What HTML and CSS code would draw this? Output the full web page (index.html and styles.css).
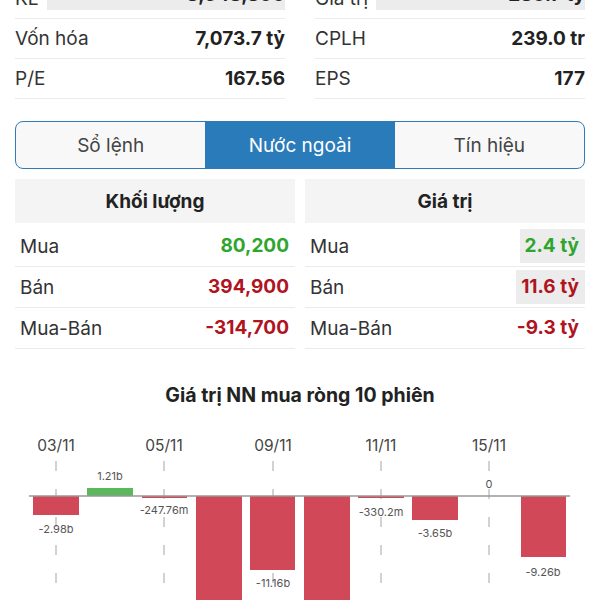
FILE: index.html
```html
<!DOCTYPE html>
<html lang="vi">
<head>
<meta charset="utf-8">
<link rel="stylesheet" href="styles.css">
</head>
<body>
<div class="wrap">
  <div class="stats">
    <div class="col">
      <div class="srow first"><span class="lbl">KL</span><span class="val flash">8,648,800</span></div>
      <div class="srow"><span class="lbl">Vốn hóa</span><span class="val">7,073.7 tỷ</span></div>
      <div class="srow"><span class="lbl">P/E</span><span class="val">167.56</span></div>
    </div>
    <div class="col">
      <div class="srow first"><span class="lbl">Giá trị</span><span class="val flash">280.7 tỷ</span></div>
      <div class="srow"><span class="lbl">CPLH</span><span class="val">239.0 tr</span></div>
      <div class="srow"><span class="lbl">EPS</span><span class="val">177</span></div>
    </div>
  </div>

  <div class="tabs">
    <div class="tab">Sổ lệnh</div>
    <div class="tab active">Nước ngoài</div>
    <div class="tab">Tín hiệu</div>
  </div>

  <div class="tables">
    <div class="tbl">
      <div class="thead">Khối lượng</div>
      <div class="trow"><span class="lbl">Mua</span><span class="num up">80,200</span></div>
      <div class="trow"><span class="lbl">Bán</span><span class="num down">394,900</span></div>
      <div class="trow"><span class="lbl">Mua-Bán</span><span class="num down">-314,700</span></div>
    </div>
    <div class="tbl">
      <div class="thead">Giá trị</div>
      <div class="trow"><span class="lbl">Mua</span><span class="num up hl">2.4 tỷ</span></div>
      <div class="trow"><span class="lbl">Bán</span><span class="num down hl">11.6 tỷ</span></div>
      <div class="trow"><span class="lbl">Mua-Bán</span><span class="num down">-9.3 tỷ</span></div>
    </div>
  </div>
</div>

<h3 class="ctitle">Giá trị NN mua ròng 10 phiên</h3>

<svg class="chart" width="600" height="180" viewBox="0 0 600 180">
  <g class="grid">
    <line x1="56" y1="41" x2="56" y2="180"/>
    <line x1="164" y1="41" x2="164" y2="180"/>
    <line x1="273" y1="41" x2="273" y2="180"/>
    <line x1="381" y1="41" x2="381" y2="180"/>
    <line x1="489" y1="41" x2="489" y2="180"/>
  </g>
  <g class="dates">
    <text x="56" y="31">03/11</text>
    <text x="164" y="31">05/11</text>
    <text x="273" y="31">09/11</text>
    <text x="381" y="31">11/11</text>
    <text x="489" y="31">15/11</text>
  </g>
  <g class="neg">
    <rect x="33" y="76" width="46" height="19"/>
    <rect x="142" y="76" width="45" height="2"/>
    <rect x="196" y="76" width="46" height="110"/>
    <rect x="250" y="76" width="45" height="74"/>
    <rect x="304" y="76" width="46" height="110"/>
    <rect x="358" y="76" width="46" height="2"/>
    <rect x="412" y="76" width="46" height="24"/>
    <rect x="521" y="76" width="45" height="61"/>
  </g>
  <rect class="pos" x="87" y="68" width="46" height="8"/>
  <line class="zero" x1="29" y1="76" x2="570" y2="76"/>
  <g class="vals">
    <text x="56" y="113">-2.98b</text>
    <text x="110" y="60">1.21b</text>
    <text x="164" y="94">-247.76m</text>
    <text x="273" y="167">-11.16b</text>
    <text x="381" y="96">-330.2m</text>
    <text x="435" y="117">-3.65b</text>
    <text x="489" y="68">0</text>
    <text x="543" y="156">-9.26b</text>
  </g>
</svg>
</body>
</html>
```

FILE: styles.css
```css
html, body {
  margin: 0;
  padding: 0;
  background: #fff;
  overflow: hidden;
}
body {
  font-family: Inter, Roboto, "Liberation Sans", sans-serif;
  color: #333;
  width: 600px;
  height: 600px;
}
.wrap {
  padding: 0 15px;
}
.stats {
  display: grid;
  grid-template-columns: 270px 270px;
  column-gap: 30px;
  margin-top: -21px;
}
.srow {
  display: flex;
  justify-content: space-between;
  align-items: center;
  height: 39px;
  border-bottom: 1px solid #ebebeb;
  font-size: 19px;
}
.srow .lbl {
  color: #333;
}
.srow .val {
  font-weight: 700;
  color: #222;
}
.srow.first .val.flash {
  background: #ececec;
  flex: 1;
  text-align: right;
  margin-left: 8px;
  margin-bottom: 8px;
  align-self: stretch;
  line-height: 31px;
}
.tabs {
  display: flex;
  box-sizing: border-box;
  margin-top: 22px;
  height: 48px;
  border: 1.5px solid #2f7bb7;
  border-radius: 8px;
  overflow: hidden;
  background: #f8f8f8;
}
.tab {
  flex: 1;
  display: flex;
  align-items: center;
  justify-content: center;
  font-size: 19px;
  color: #444;
}
.tab.active {
  background: #2a7bb9;
  color: #fff;
}
.tables {
  display: grid;
  grid-template-columns: 280px 280px;
  column-gap: 10px;
  margin-top: 10px;
}
.thead {
  height: 44px;
  background: #f4f4f4;
  display: flex;
  align-items: center;
  justify-content: center;
  font-weight: 700;
  font-size: 19px;
  color: #222;
  margin-bottom: 3px;
}
.trow {
  display: flex;
  justify-content: space-between;
  align-items: center;
  height: 40px;
  border-bottom: 1px solid #ebebeb;
  padding-left: 5px;
  font-size: 19px;
}
.trow .lbl {
  color: #333;
}
.num {
  font-weight: 700;
  padding: 0 6px 0 5px;
  line-height: 34px;
}
.num.up { color: #2ea52e; }
.num.down { color: #b0141f; }
.num.hl { background: #ececec; }
.ctitle {
  margin: 0;
  padding: 35px 0 14px;
  line-height: 22px;
  text-align: center;
  font-size: 19.5px;
  font-weight: 700;
  color: #222;
}
.chart {
  display: block;
}
.grid line {
  stroke: #c4c4c4;
  stroke-width: 1.5;
  stroke-dasharray: 10 18;
}
.dates text {
  font-family: Inter, Roboto, sans-serif;
  font-size: 15.5px;
  fill: #444;
  text-anchor: middle;
}
.neg rect { fill: #d14859; }
.pos { fill: #5cb85c; }
.zero {
  stroke: #999;
  stroke-width: 1.5;
}
.vals text {
  font-family: Inter, Roboto, sans-serif;
  font-size: 11px;
  fill: #555;
  text-anchor: middle;
}
```
